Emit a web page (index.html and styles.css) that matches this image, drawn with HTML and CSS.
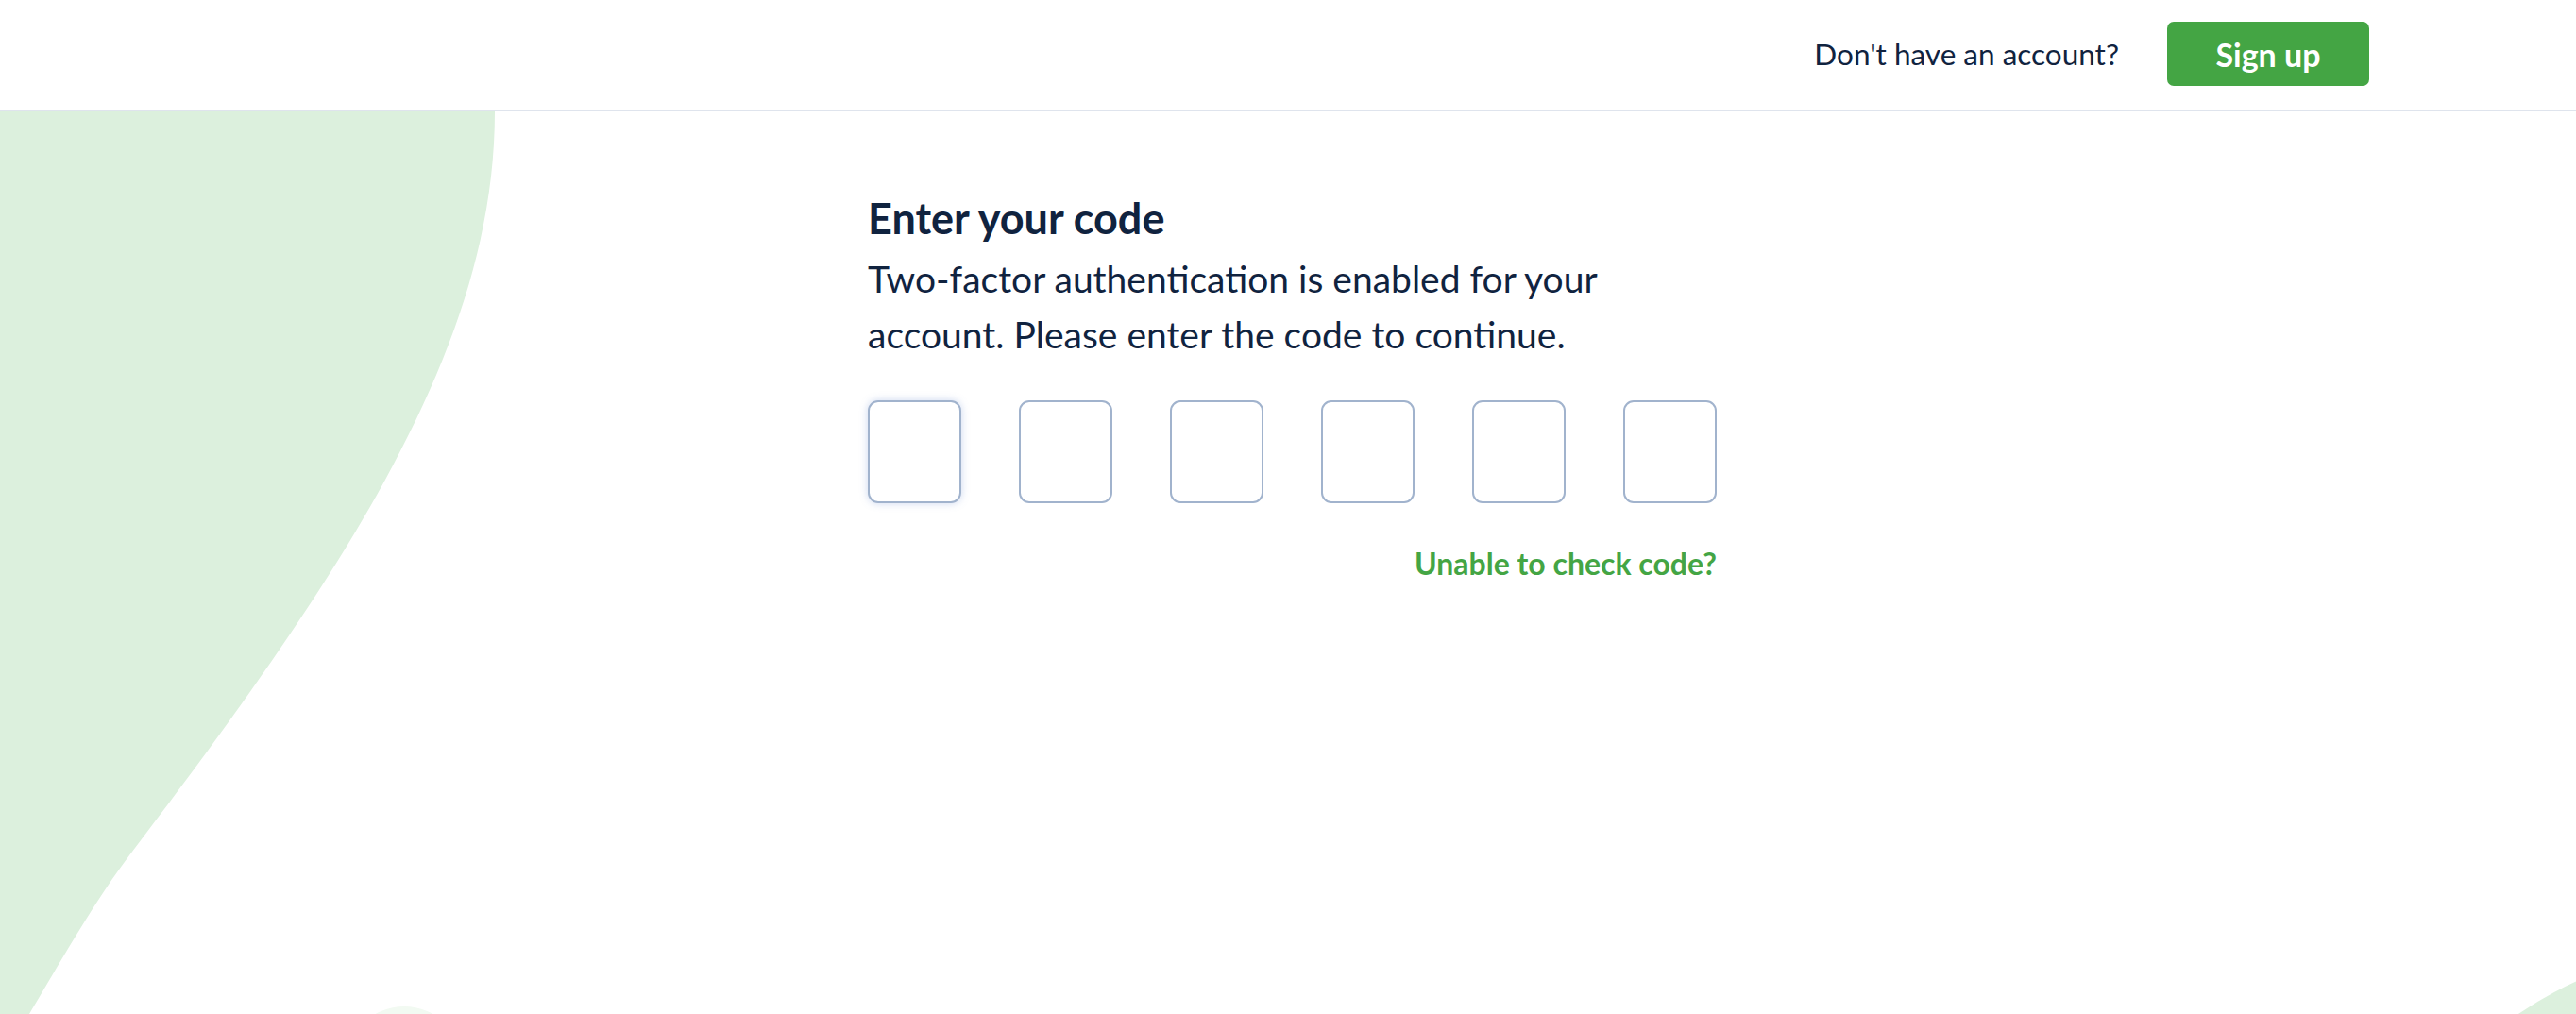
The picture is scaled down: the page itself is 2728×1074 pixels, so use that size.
FILE: index.html
```html
<!DOCTYPE html>
<html>

<head>
    <title>Enter your code</title>
    <meta name="viewport" content="width=device-width, initial-scale=1.0">
    <link rel="stylesheet" href="styles.css">
</head>

<body>
    <!-- background shapes -->
    <svg class="blob-left" width="540" height="956" viewBox="0 0 540 956">
        <path d="M0 0 H524 C524 250 365 488 137 788 C99 838 55 916 31 956 H0 Z" fill="#dcf0dd"/>
    </svg>
    <div class="dot-bottom"></div>
    <div class="circle-right"></div>

    <header class="top-bar">
        <span class="top-question">Don't have an account?</span>
        <button type="button" class="signup-btn">Sign up</button>
    </header>

    <main class="code-form">
        <h1>Enter your code</h1>
        <p class="intro">Two-factor authentication is enabled for your account. Please enter the code to continue.</p>

        <div class="code-group">
            <input type="text" maxlength="1" class="code-box focused">
            <input type="text" maxlength="1" class="code-box">
            <input type="text" maxlength="1" class="code-box">
            <input type="text" maxlength="1" class="code-box">
            <input type="text" maxlength="1" class="code-box">
            <input type="text" maxlength="1" class="code-box">
        </div>

        <div class="help-row">
            <a href="#" class="help-link">Unable to check code?</a>
        </div>
    </main>
</body>
</html>
```

FILE: styles.css
```css
* {
    box-sizing: border-box;
}

html,
body {
    overflow: hidden;
}

body {
    margin: 0;
    height: 1074px;
    position: relative;
    background-color: #ffffff;
    font-family: Lato, "Open Sans", sans-serif;
    color: #10233f;
}

/* decorative shapes */
.blob-left {
    position: absolute;
    top: 118px;
    left: 0;
}

.dot-bottom {
    position: absolute;
    left: 366px;
    top: 1066px;
    width: 124px;
    height: 124px;
    border-radius: 50%;
    background-color: #f2faf2;
}

.circle-right {
    position: absolute;
    left: 2493px;
    top: 1004px;
    width: 800px;
    height: 800px;
    border-radius: 50%;
    background-color: #dcf0dd;
}

.top-bar {
    position: relative;
    height: 118px;
    display: flex;
    justify-content: flex-end;
    align-items: center;
    padding: 0 219px 2px 0;
    border-bottom: 2px solid #dfe4ed;
    background-color: #ffffff;
}

.top-question {
    font-size: 31.5px;
    margin-right: 51px;
}

.signup-btn {
    width: 214px;
    height: 68px;
    background-color: #44a544;
    color: #ffffff;
    border: none;
    border-radius: 7px;
    font-family: Lato, sans-serif;
    font-weight: 700;
    font-size: 34px;
    cursor: pointer;
}

.code-form {
    position: relative;
    width: 899px;
    margin-left: 919px;
    padding-top: 89px;
}

h1 {
    margin: 0;
    font-size: 45px;
    line-height: 48px;
    font-weight: 700;
}

.intro {
    margin: 11px 0 0;
    font-size: 39px;
    line-height: 59px;
}

.code-group {
    display: flex;
    justify-content: space-between;
    margin-top: 40px;
}

.code-box {
    width: 99px;
    height: 109px;
    border: 2px solid #a1b3cd;
    border-radius: 11px;
    background: #ffffff;
    font-size: 40px;
    text-align: center;
    outline: none;
}

.code-box.focused {
    box-shadow: 0 0 9px rgba(110, 140, 210, 0.35);
}

.help-row {
    display: flex;
    justify-content: flex-end;
    margin-top: 46px;
}

.help-link {
    color: #44a544;
    font-weight: 700;
    font-size: 32px;
    line-height: 36px;
    text-decoration: none;
}
```
